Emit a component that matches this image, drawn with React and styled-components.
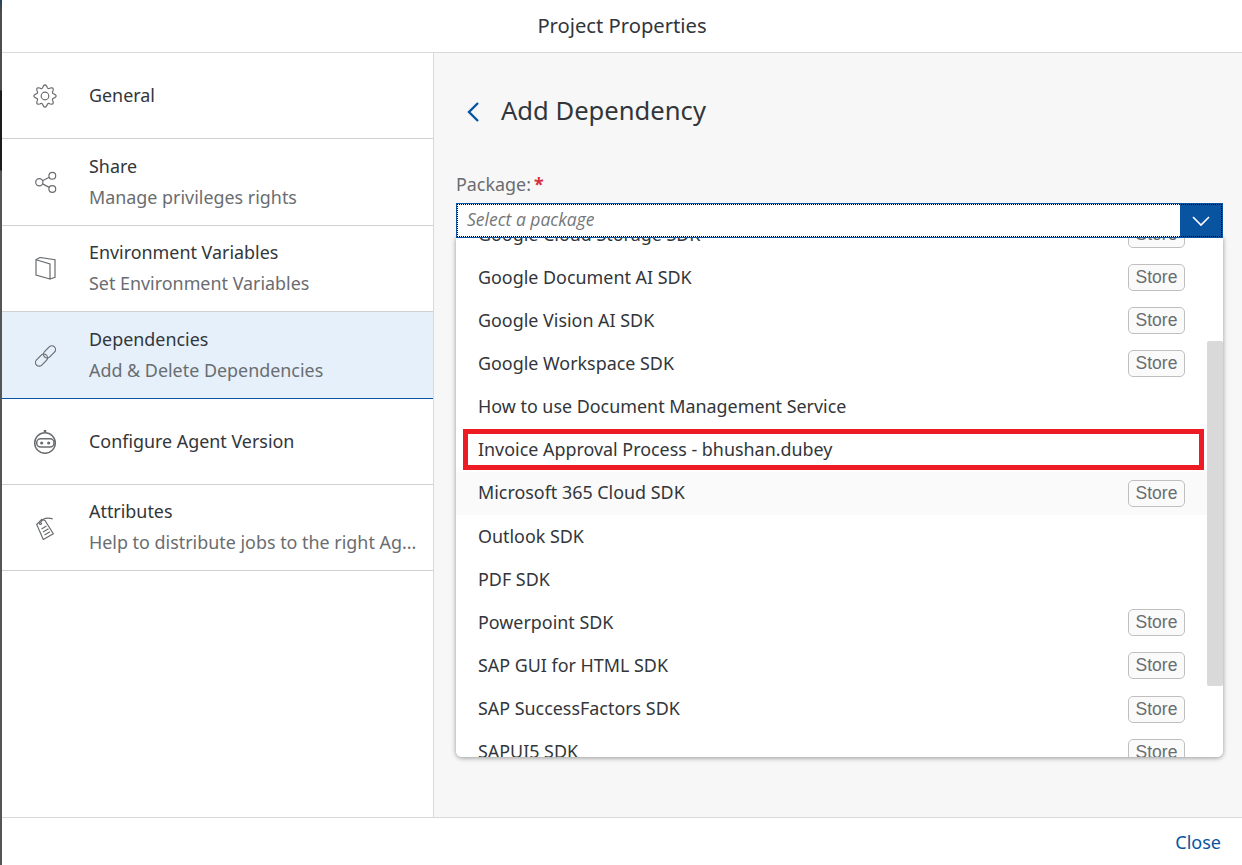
import React from "react";
import styled, { createGlobalStyle } from "styled-components";

const GlobalStyle = createGlobalStyle`
  html, body { margin: 0; padding: 0; height: 100%; background: #fff; }
  body { font-family: "Noto Sans", "Open Sans", sans-serif; color: #32363a; }
  * { box-sizing: border-box; }
`;

const Page = styled.div`
  width: 1242px;
  height: 865px;
  overflow: hidden;
  display: flex;
  background: #4d4d4d;
`;

const Stripe = styled.div`
  width: 2px;
  flex: none;
  background: linear-gradient(to bottom, #24425c 0, #4d4d4d 12px, #4d4d4d 90px, #1c1c1c 91px, #1c1c1c 170px, #555 171px, #555 100%);
`;

const Dialog = styled.div`
  flex: 1;
  display: flex;
  flex-direction: column;
  background: #fff;
`;

const Header = styled.header`
  height: 53px;
  flex: none;
  display: flex;
  align-items: center;
  justify-content: center;
  padding-bottom: 2px;
  border-bottom: 1px solid #d9d9d9;
  font-size: 20.2px;
  color: #32363a;
`;

const Body = styled.div`
  flex: 1;
  display: flex;
  min-height: 0;
`;

const Sidebar = styled.nav`
  width: 432px;
  flex: none;
  background: #fff;
  border-right: 1px solid #d9d9d9;
`;

const NavRow = styled.div`
  height: ${(p) => p.$h}px;
  display: flex;
  align-items: center;
  padding-left: 31px;
  gap: 32px;
  border-bottom: 1px solid ${(p) => (p.$active ? "#0854a0" : "#d0d0d0")};
  background: ${(p) => (p.$active ? "#e5f0fa" : "#fff")};
`;

const NavIcon = styled.svg`
  width: 24px;
  height: 24px;
  flex: none;
  fill: none;
  stroke: #6a6d70;
  stroke-width: 1.2;
`;

const NavText = styled.div`
  min-width: 0;
  display: flex;
  flex-direction: column;
  gap: 9px;
  padding-bottom: 2px;
`;

const NavTitle = styled.div`
  font-size: 17.9px;
  line-height: 22px;
  color: #32363a;
`;

const NavSub = styled.div`
  font-size: 17.9px;
  line-height: 22px;
  color: #6a6d70;
  white-space: nowrap;
`;

const Content = styled.main`
  flex: 1;
  min-width: 0;
  background: #f7f7f7;
  padding: 0 19px 0 22px;
`;

const TitleRow = styled.div`
  height: 116px;
  display: flex;
  align-items: center;
  padding: 0 0 2px 10px;
  gap: 19px;
`;

const BackIcon = styled.svg`
  width: 16px;
  height: 24px;
  margin-top: 4px;
  fill: none;
  stroke: #0854a0;
  stroke-width: 2.4;
`;

const PageTitle = styled.h1`
  margin: 0;
  font-size: 25.6px;
  font-weight: 400;
  color: #32363a;
`;

const Label = styled.div`
  height: 34px;
  font-size: 17.9px;
  line-height: 30px;
  color: #6a6d70;
`;

const Required = styled.span`
  color: #d9303d;
  font-weight: 700;
  margin-left: 3px;
`;

const Combo = styled.div`
  position: relative;
  z-index: 2;
  height: 35px;
  display: flex;
  border: 1px solid #0854a0;
  background: #fff;
  &::after {
    content: "";
    position: absolute;
    inset: 0;
    border: 1px dotted #000;
    pointer-events: none;
  }
`;

const ComboInput = styled.div`
  flex: 1;
  padding-left: 10px;
  font-family: "Open Sans", "Noto Sans", sans-serif;
  font-size: 17.5px;
  font-style: italic;
  line-height: 31px;
  color: #74777a;
`;

const ComboButton = styled.div`
  width: 42px;
  background: #0854a0;
  display: flex;
  align-items: center;
  justify-content: center;
`;

const ChevronIcon = styled.svg`
  width: 18px;
  height: 12px;
  fill: none;
  stroke: #fff;
  stroke-width: 1.6;
`;

const Popup = styled.div`
  position: relative;
  height: 520px;
  margin-top: -1px;
  background: #fff;
  border-radius: 0 0 6px 6px;
  overflow: hidden;
  box-shadow: 0 1px 5px rgba(0, 0, 0, 0.4);
`;

const List = styled.div`
  margin-top: -24px;
`;

const Item = styled.div`
  position: relative;
  height: 43.15px;
  display: flex;
  align-items: center;
  justify-content: space-between;
  padding: 0 38px 0 22px;
  font-size: 17.9px;
  color: #32363a;
  background: ${(p) => (p.$hover ? "#fafafa" : "#fff")};
  ${(p) =>
    p.$marked &&
    `&::after {
      content: "";
      position: absolute;
      left: 7px;
      right: 19px;
      top: 0;
      bottom: 2px;
      border: 5px solid #ed1c24;
    }`}
`;

const ItemName = styled.span`
  padding-bottom: 2px;
`;

const Badge = styled.span`
  height: 27px;
  width: 57px;
  display: flex;
  align-items: center;
  justify-content: center;
  border: 1px solid #bfbfbf;
  border-radius: 5px;
  background: #fafafa;
  font-family: "Liberation Sans", Arial, sans-serif;
  font-size: 17.5px;
  color: #6a6d70;
`;

const Thumb = styled.div`
  position: absolute;
  top: 104px;
  right: 0;
  width: 16px;
  height: 345px;
  background: #d9d9d9;
  border-radius: 2px;
`;

const Footer = styled.footer`
  height: 48px;
  flex: none;
  display: flex;
  align-items: center;
  justify-content: flex-end;
  padding-right: 21px;
  background: #fff;
  border-top: 1px solid #d9d9d9;
`;

const CloseLink = styled.a`
  font-size: 18px;
  color: #0854a0;
`;

// wavy gear outline with 8 bumps
function gearPath() {
  const pts = [];
  for (let i = 0; i < 96; i++) {
    const a = (i / 96) * Math.PI * 2;
    const r = 9.6 + 1.5 * Math.cos(a * 8);
    pts.push(`${(12 + r * Math.cos(a)).toFixed(2)} ${(12 + r * Math.sin(a)).toFixed(2)}`);
  }
  return `M${pts.join("L")}z`;
}

const icons = {
  gear: (
    <>
      <circle cx="12" cy="12" r="3.8" />
      <path d={gearPath()} />
    </>
  ),
  share: (
    <>
      <circle cx="6.3" cy="12.3" r="3.6" />
      <circle cx="19.3" cy="5.7" r="3.4" />
      <circle cx="19.3" cy="19" r="3.4" />
      <path d="M9.5 10.7l6.800-3.500M9.500 13.900l6.800 3.500" />
    </>
  ),
  book: (
    <>
      <path d="M3 2.700L17 7v15L3 18z" />
      <path d="M3 2.700L7 .5l15 2.200v17.600L17 22" />
    </>
  ),
  link: (
    <>
      <rect x="9.500" y="5.200" width="14" height="7.400" rx="3.700" transform="rotate(-45 16.500 8.900)" />
      <rect x="1.500" y="13.400" width="14" height="7.400" rx="3.700" transform="rotate(-45 8.500 17.100)" />
    </>
  ),
  bot: (
    <>
      <circle cx="12" cy="13" r="10.300" strokeWidth="1.5" />
      <rect x="3.700" y="8.800" width="17.300" height="8.300" rx="4" strokeWidth="1.5" />
      <circle cx="8.700" cy="13" r="1" fill="#6a6d70" />
      <circle cx="15.700" cy="13" r="1" fill="#6a6d70" />
      <circle cx="12" cy=".9" r=".8" fill="#6a6d70" />
    </>
  ),
  tag: (
    <>
      <path d="M3.700 8.500L8.700 3.500l3.300 1 8.300 13.300-10 5.700z" />
      <circle cx="7.500" cy="7.500" r="1" />
      <path d="M8.500 13l5-3M10 16l5.500-3.200M11.500 19l5.500-3.200M8 6c2-4 6-4.500 11.700-3.200" />
    </>
  ),
};

const navItems = [
  { icon: "gear", title: "General", h: 86 },
  { icon: "share", title: "Share", sub: "Manage privileges rights", h: 87 },
  { icon: "book", title: "Environment Variables", sub: "Set Environment Variables", h: 86 },
  { icon: "link", title: "Dependencies", sub: "Add & Delete Dependencies", h: 87, active: true },
  { icon: "bot", title: "Configure Agent Version", h: 86 },
  { icon: "tag", title: "Attributes", sub: "Help to distribute jobs to the right Ag...", h: 86 },
];

const packages = [
  { name: "Google Cloud Storage SDK", store: true },
  { name: "Google Document AI SDK", store: true },
  { name: "Google Vision AI SDK", store: true },
  { name: "Google Workspace SDK", store: true },
  { name: "How to use Document Management Service" },
  { name: "Invoice Approval Process - bhushan.dubey", marked: true },
  { name: "Microsoft 365 Cloud SDK", store: true, hover: true },
  { name: "Outlook SDK" },
  { name: "PDF SDK" },
  { name: "Powerpoint SDK", store: true },
  { name: "SAP GUI for HTML SDK", store: true },
  { name: "SAP SuccessFactors SDK", store: true },
  { name: "SAPUI5 SDK", store: true },
];

export default function App() {
  return (
    <Page>
      <GlobalStyle />
      <Stripe />
      <Dialog>
        <Header>Project Properties</Header>
        <Body>
          <Sidebar>
            {navItems.map((item) => (
              <NavRow key={item.title} $h={item.h} $active={item.active}>
                <NavIcon viewBox="0 0 24 24">{icons[item.icon]}</NavIcon>
                <NavText>
                  <NavTitle>{item.title}</NavTitle>
                  {item.sub && <NavSub>{item.sub}</NavSub>}
                </NavText>
              </NavRow>
            ))}
          </Sidebar>
          <Content>
            <TitleRow>
              <BackIcon viewBox="0 0 16 24">
                <path d="M12 3L3 12l9 9" />
              </BackIcon>
              <PageTitle>Add Dependency</PageTitle>
            </TitleRow>
            <Label>
              Package:<Required>*</Required>
            </Label>
            <Combo>
              <ComboInput>Select a package</ComboInput>
              <ComboButton>
                <ChevronIcon viewBox="0 0 18 12">
                  <path d="M1 2l8 8 8-8" />
                </ChevronIcon>
              </ComboButton>
            </Combo>
            <Popup>
              <List>
                {packages.map((pkg) => (
                  <Item key={pkg.name} $marked={pkg.marked} $hover={pkg.hover}>
                    <ItemName>{pkg.name}</ItemName>
                    {pkg.store && <Badge>Store</Badge>}
                  </Item>
                ))}
              </List>
              <Thumb />
            </Popup>
          </Content>
        </Body>
        <Footer>
          <CloseLink>Close</CloseLink>
        </Footer>
      </Dialog>
    </Page>
  );
}
